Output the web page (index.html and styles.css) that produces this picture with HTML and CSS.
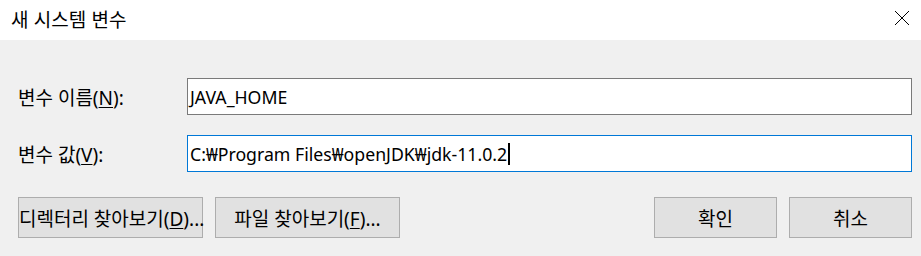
FILE: index.html
```html
<!DOCTYPE html>
<html lang="ko">
<head>
    <meta charset="UTF-8">
    <title>새 시스템 변수</title>
    <link rel="stylesheet" href="styles.css">
</head>
<body>

    <div class="dialog">

        <div class="titlebar">
            <span class="title">새 시스템 변수</span>
            <svg class="close" width="16" height="16" viewBox="0 0 16 16">
                <path d="M1 1 L15 15 M15 1 L1 15" stroke="#000" stroke-width="1" fill="none"/>
            </svg>
        </div>

        <div class="content">
            <div class="fields">
                <label class="label">변수 이름(<u>N</u>):</label>
                <div class="field">JAVA_HOME</div>

                <label class="label">변수 값(<u>V</u>):</label>
                <div class="field focused">C:₩Program Files₩openJDK₩jdk-11.0.2<span class="caret"></span></div>
            </div>

            <div class="buttons">
                <button class="btn wide">디렉터리 찾아보기(<u>D</u>)...</button>
                <button class="btn wide">파일 찾아보기(<u>F</u>)...</button>
                <div class="spacer"></div>
                <button class="btn">확인</button>
                <button class="btn">취소</button>
            </div>
        </div>

    </div>

</body>
</html>
```

FILE: styles.css
```css
body {
    margin: 0;
    background-color: #f0f0f0;
    font-family: "Noto Sans", "Noto Sans CJK KR", sans-serif;
    font-size: 18px;
    color: #000;
}

.dialog {
    width: 921px;
    height: 256px;
    overflow: hidden;
}

.titlebar {
    height: 40px;
    background-color: #fff;
    display: flex;
    align-items: center;
    padding: 0 9px 0 11px;
}

.title {
    font-family: "Noto Sans CJK KR", sans-serif;
    font-size: 19px;
    flex: 1;
    padding-bottom: 3px;
}

.close {
    margin-right: 2px;
    margin-bottom: 4px;
}

.content {
    padding: 38px 9px 0 18px;
}

.fields {
    display: grid;
    grid-template-columns: 169px 1fr;
    row-gap: 20px;
    align-items: center;
}

.label {
    font-size: 19px;
}

u {
    text-underline-offset: 2px;
}

.field {
    height: 37px;
    box-sizing: border-box;
    background-color: #fff;
    border: 1px solid #7a7a7a;
    padding: 0 0 0 2px;
    display: flex;
    align-items: center;
    white-space: nowrap;
    font-size: 17.7px;
}

.field.focused {
    border-color: #0078d7;
}

.caret {
    display: inline-block;
    width: 2px;
    height: 22px;
    background-color: #000;
    margin-left: 1px;
}

.buttons {
    display: flex;
    gap: 12px;
    margin-top: 25px;
}

.spacer {
    flex: 1;
}

.btn {
    width: 123px;
    height: 41px;
    background-color: #e1e1e1;
    border: 1px solid #adadad;
    font-family: "Noto Sans", "Noto Sans CJK KR", sans-serif;
    font-size: 19px;
    color: #000;
    padding: 0;
    white-space: nowrap;
}

.btn.wide {
    width: 185px;
}
```
